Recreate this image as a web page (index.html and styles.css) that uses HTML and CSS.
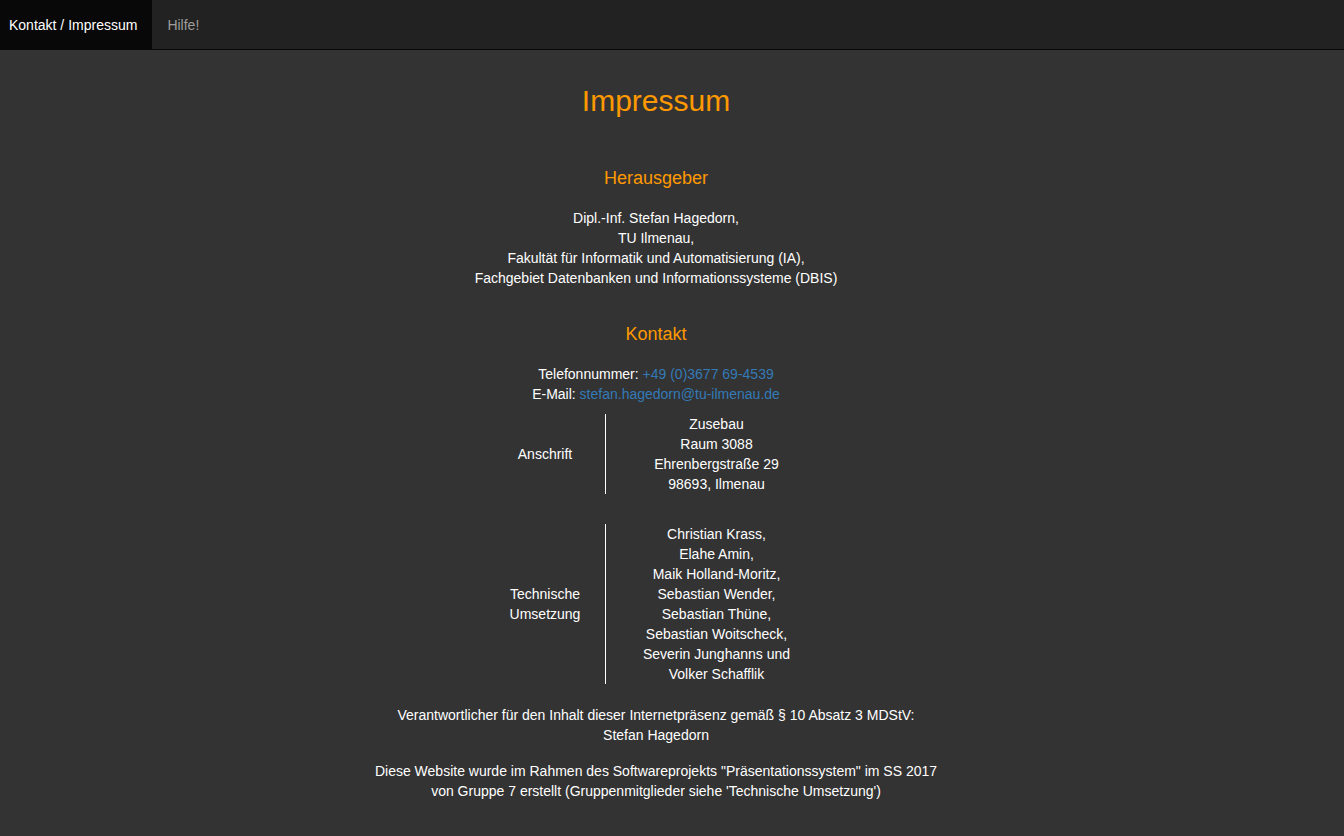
FILE: index.html
```html
<!DOCTYPE html>
<html lang="de">
<head>
<meta charset="utf-8">
<title>Impressum</title>
<link rel="stylesheet" href="styles.css">
</head>
<body>
<nav class="navbar">
  <ul class="nav">
    <li class="nav-item active"><a href="#">Kontakt / Impressum</a></li>
    <li class="nav-item"><a href="#">Hilfe!</a></li>
  </ul>
</nav>
<main class="content">
  <h2 class="title">Impressum</h2>

  <h4 class="section-title first">Herausgeber</h4>
  <p class="block">
    Dipl.-Inf. Stefan Hagedorn,<br>
    TU Ilmenau,<br>
    Fakultät für Informatik und Automatisierung (IA),<br>
    Fachgebiet Datenbanken und Informationssysteme (DBIS)
  </p>

  <h4 class="section-title contact">Kontakt</h4>
  <p class="block">
    Telefonnummer: <a class="link" href="#">+49 (0)3677 69-4539</a><br>
    E-Mail: <a class="link" href="#">stefan.hagedorn@tu-ilmenau.de</a>
  </p>

  <div class="info-grid">
    <div class="label-cell">Anschrift</div>
    <div class="value-cell">
      Zusebau<br>
      Raum 3088<br>
      Ehrenbergstraße 29<br>
      98693, Ilmenau
    </div>
    <div class="label-cell">Technische Umsetzung</div>
    <div class="value-cell">
      Christian Krass,<br>
      Elahe Amin,<br>
      Maik Holland-Moritz,<br>
      Sebastian Wender,<br>
      Sebastian Thüne,<br>
      Sebastian Woitscheck,<br>
      Severin Junghanns und<br>
      Volker Schafflik
    </div>
  </div>

  <p class="block note">
    Verantwortlicher für den Inhalt dieser Internetpräsenz gemäß § 10 Absatz 3 MDStV:<br>
    Stefan Hagedorn
  </p>
  <p class="block note">
    Diese Website wurde im Rahmen des Softwareprojekts "Präsentationssystem" im SS 2017<br>
    von Gruppe 7 erstellt (Gruppenmitglieder siehe 'Technische Umsetzung')
  </p>
</main>
</body>
</html>
```
FILE: styles.css
```css
html, body {
  margin: 0;
  padding: 0;
}

body {
  background: #333333;
  color: #ffffff;
  font-family: "Liberation Sans", Arial, Helvetica, sans-serif;
  font-size: 14px;
  line-height: 20px;
  min-height: 836px;
}

.navbar {
  height: 49px;
  background: #222222;
  border-bottom: 1px solid #080808;
}

.nav {
  list-style: none;
  margin: 0;
  padding: 0;
  display: flex;
  height: 100%;
}

.nav-item a {
  display: flex;
  align-items: center;
  height: 49px;
  padding: 0 15px;
  color: #9d9d9d;
  text-decoration: none;
}

.nav-item:first-child a {
  padding-left: 9px;
}

.nav-item.active a {
  background: #080808;
  color: #ffffff;
}

.content {
  width: 1312px;
  text-align: center;
  padding-bottom: 20px;
}

.title {
  margin: 34px 0 0;
  font-size: 30px;
  line-height: 33px;
  font-weight: normal;
  color: #ff9900;
}

.section-title {
  margin: 36px 0 19px;
  font-size: 18px;
  line-height: 20px;
  font-weight: normal;
  color: #ff9900;
}

.section-title.first {
  margin-top: 51px;
  margin-bottom: 20px;
}

.section-title.contact {
  margin-bottom: 20px;
}

.block {
  margin: 0;
}

.link {
  color: #337ab7;
  text-decoration: none;
}

.info-grid {
  display: grid;
  grid-template-columns: 121px 221px;
  row-gap: 30px;
  justify-content: center;
  margin: 10px 0 21px;
}

.label-cell {
  display: flex;
  align-items: center;
  justify-content: center;
  padding: 0 22px;
  border-right: 1px solid #ffffff;
}

.value-cell {
  padding: 0 10px;
}

.note + .note {
  margin-top: 16px;
}
```
